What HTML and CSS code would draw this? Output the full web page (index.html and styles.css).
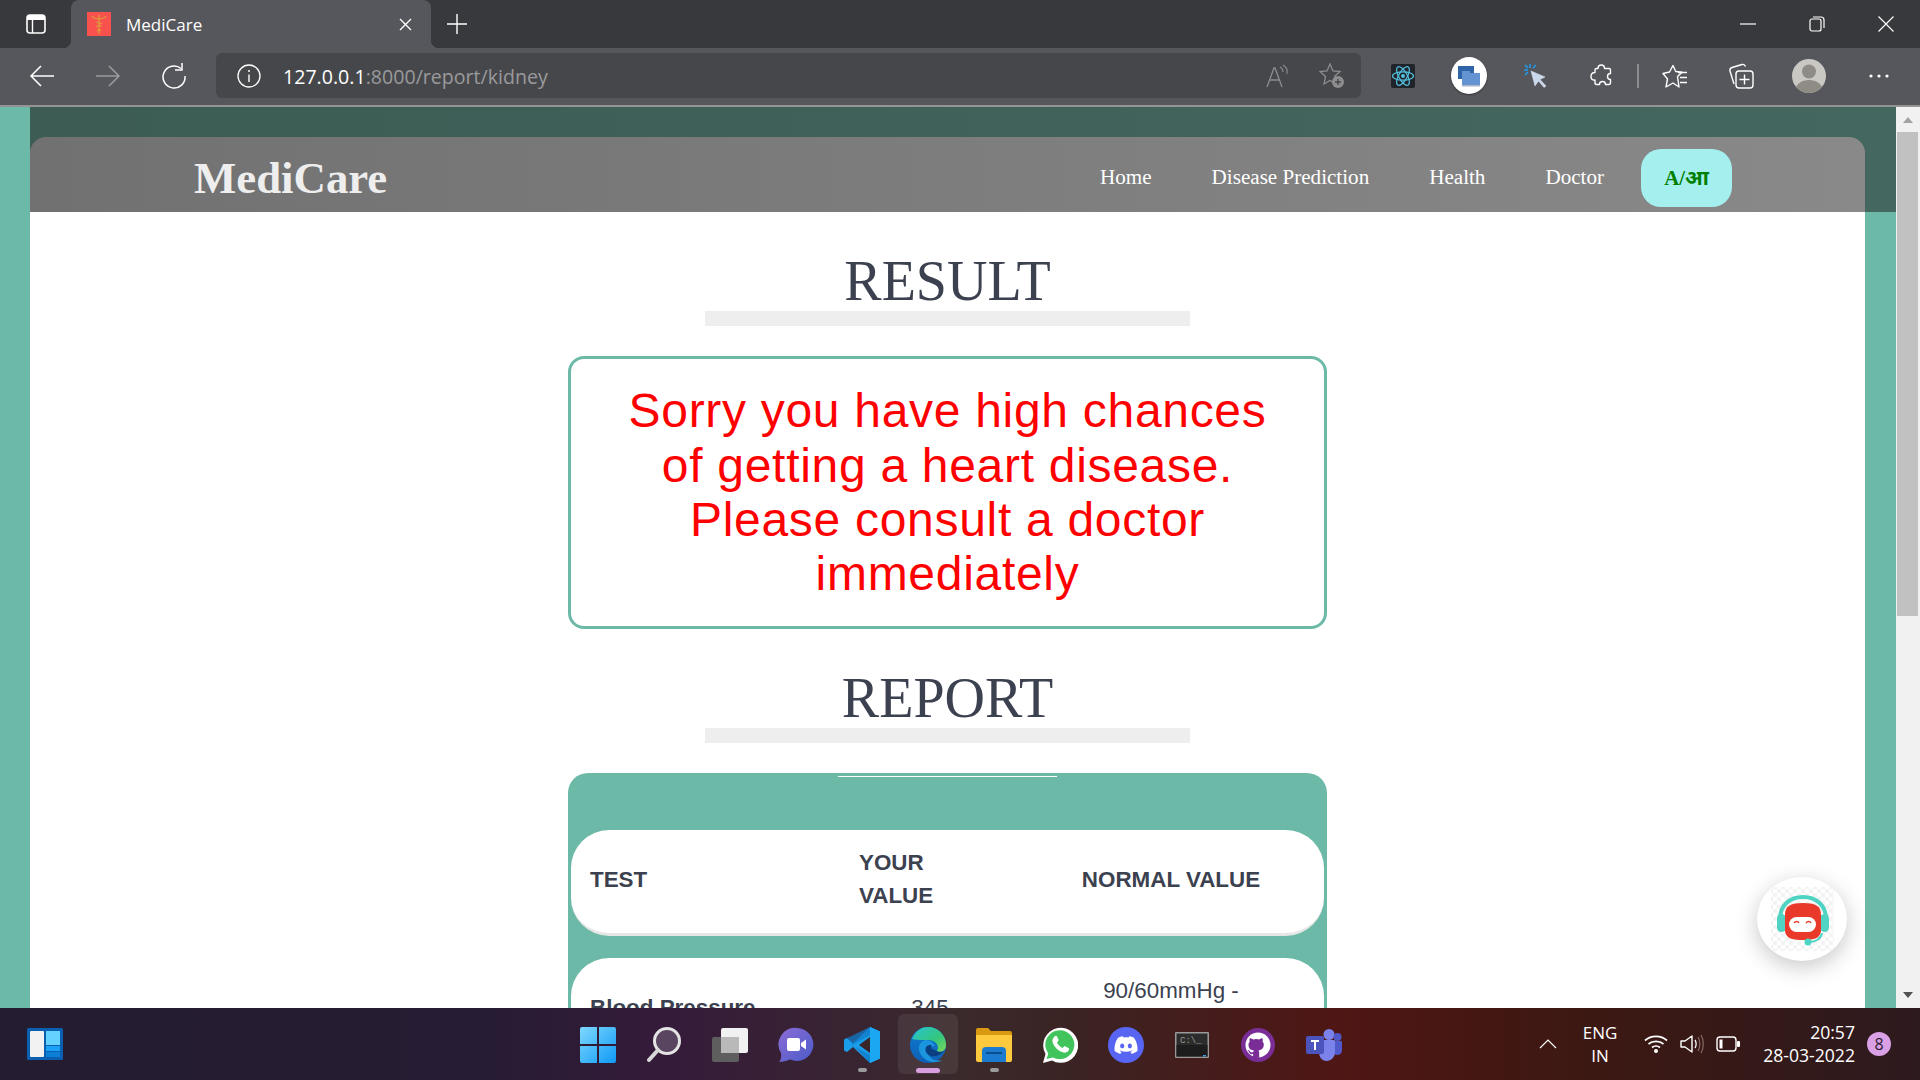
FILE: index.html
```html
<!DOCTYPE html>
<html lang="en">
<head>
<meta charset="utf-8">
<title>MediCare</title>
<link rel="stylesheet" href="styles.css">
</head>
<body>
<div class="screen">
  <div class="tabstrip">
    <div class="tab-toggle">
      <svg width="20" height="20" viewBox="0 0 20 20"><rect x="1" y="1" width="18" height="18" rx="3" fill="none" stroke="#fff" stroke-width="1.6"/><path d="M1 4a3 3 0 0 1 3-3h12a3 3 0 0 1 3 3v2H1z" fill="#fff"/><path d="M6.5 6v13" stroke="#fff" stroke-width="1.4"/></svg>
    </div>
    <div class="tab">
      <svg class="favicon" width="24" height="24" viewBox="0 0 24 24"><rect width="24" height="24" fill="#f9514e"/><path d="M12 3v19M5 4c2 3 4 3 7 3s5 0 7-3M9 10c2 1 4 2 6 1M9 15c2-2 4-2 6-1M10 19c1-1 3-1 4-1" fill="none" stroke="#dd9a3c" stroke-width="1.3"/></svg>
      <span class="tab-title">MediCare</span>
      <svg width="13" height="13" viewBox="0 0 13 13"><path d="M1 1l11 11M12 1L1 12" stroke="#fff" stroke-width="1.4"/></svg>
    </div>
    <div class="tab-new">
      <svg width="20" height="20" viewBox="0 0 20 20"><path d="M10 0v20M0 10h20" stroke="#fff" stroke-width="1.4"/></svg>
    </div>
    <div class="window-controls">
      <div class="win-btn"><svg width="16" height="16" viewBox="0 0 16 16"><path d="M0 8h16" stroke="#fff" stroke-width="1.2"/></svg></div>
      <div class="win-btn"><svg width="16" height="16" viewBox="0 0 16 16"><rect x="1" y="3" width="11" height="12" rx="2" fill="none" stroke="#fff" stroke-width="1.2"/><path d="M4 1h8a3 3 0 0 1 3 3v8" fill="none" stroke="#fff" stroke-width="1.2"/></svg></div>
      <div class="win-btn"><svg width="16" height="16" viewBox="0 0 16 16"><path d="M.5.5l15 15M15.500.5l-15 15" stroke="#fff" stroke-width="1.2"/></svg></div>
    </div>
  </div>

  <div class="toolbar">
    <div class="tool"><svg width="26" height="26" viewBox="0 0 26 26"><path d="M25 13H2M12 3L2 13l10 10" fill="none" stroke="#fff" stroke-width="1.5"/></svg></div>
    <div class="tool"><svg width="26" height="26" viewBox="0 0 26 26"><path d="M1 13h23M14 3l10 10-10 10" fill="none" stroke="#9b9b9e" stroke-width="1.5"/></svg></div>
    <div class="tool"><svg width="26" height="26" viewBox="0 0 26 26"><path d="M20 5.500A11 11 0 1 0 24 13" fill="none" stroke="#fff" stroke-width="1.5"/><path d="M21 0v7h-7" fill="none" stroke="#fff" stroke-width="1.5"/></svg></div>
    <div class="address">
      <svg width="24" height="24" viewBox="0 0 24 24"><circle cx="12" cy="12" r="11" fill="none" stroke="#fff" stroke-width="1.3"/><path d="M12 10.500v7.500" stroke="#fff" stroke-width="1.4"/><circle cx="12" cy="7" r="1" fill="#fff"/></svg>
      <div class="url"><span class="url-host">127.0.0.1</span>:8000/report/kidney</div>
      <svg class="addr-read" width="24" height="24" viewBox="0 0 24 24"><path d="M1 23L8 4h1l7 19M4 16h10" fill="none" stroke="#8d8d90" stroke-width="1.3"/><path d="M14 3c2 1 3 3 3 5M17 1c3 2 5 5 4 9" fill="none" stroke="#8d8d90" stroke-width="1.1"/></svg>
      <svg class="addr-fav" width="26" height="26" viewBox="0 0 26 26"><path d="M11 1l3 7 7 .6-5.300 4.700L17 21l-6-3.500L5 21l1.500-7.500L1 8.600 8 8z" fill="none" stroke="#8d8d90" stroke-width="1.3"/><circle cx="19" cy="19" r="6" fill="#8d8d90"/><path d="M19 16v6M16 19h6" stroke="#46474b" stroke-width="1.4"/></svg>
    </div>
    <div class="ext-group">
      <div class="tool"><svg width="24" height="24" viewBox="0 0 24 24"><rect width="24" height="24" rx="2" fill="#20232a"/><g fill="none" stroke="#53c1de" stroke-width="1.2"><ellipse cx="12" cy="12" rx="10.500" ry="4.200"/><ellipse cx="12" cy="12" rx="10.500" ry="4.200" transform="rotate(60 12 12)"/><ellipse cx="12" cy="12" rx="10.500" ry="4.200" transform="rotate(120 12 12)"/></g><circle cx="12" cy="12" r="2" fill="#53c1de"/></svg></div>
      <div class="tool"><div class="ext-circle"><svg width="24" height="22" viewBox="0 0 24 22"><rect x="1" y="1" width="16" height="13" fill="#2f64a8"/><rect x="5" y="8" width="18" height="13" fill="#6493d2"/><rect x="5" y="6" width="8" height="3" fill="#6493d2"/><rect x="5" y="20" width="18" height="1.500" fill="#a9b6c8"/></svg></div></div>
      <div class="tool"><svg width="24" height="24" viewBox="0 0 24 24"><path d="M8 7l14 6-5 2.500 6 6.500-2 1.500-5.500-6.500L12 22z" fill="#c9d8ec" stroke="#dfe7f2" stroke-width=".5"/><path d="M7 0v4M1 6h4M13 1l-3 3M2 1l3 3M2 11l3-3" stroke="#1e9df1" stroke-width="1.500"/></svg></div>
      <div class="tool"><svg width="24" height="24" viewBox="0 0 24 24"><path d="M9 4.500C9 2.500 10.500 1 12.300 1s3.200 1.500 3.200 3.500H20c1 0 1.500.7 1.500 1.500v3.500c-1.800 0-3 1.300-3 3s1.200 3 3 3v3c0 1.200-.8 2-2 2h-3c0-1.500-1.200-3-3-3s-3 1.500-3 3H7.500c-1 0-1.500-.7-1.500-1.500v-3C4 16.500 2 15.500 2 12.500S4 8.500 6 8.500V6c0-1 .7-1.500 1.500-1.500z" fill="none" stroke="#fff" stroke-width="1.400" stroke-linejoin="round"/></svg></div>
      <div class="tool-sep"></div>
      <div class="tool"><svg width="26" height="24" viewBox="0 0 26 24"><path d="M11 1.500l2.800 6 6.200.7-4.500 4.300L17 23l-6-4-7 4 1.500-8L1 9.500l6.500-1.500z" fill="none" stroke="#fff" stroke-width="1.400" stroke-linejoin="round"/><path d="M16 8.500h9M18 13.500h7M18 18.500h7" stroke="#fff" stroke-width="1.400"/></svg></div>
      <div class="tool"><svg width="26" height="26" viewBox="0 0 26 26"><path d="M6 21L2 8c-.500-2 .500-3 2-3.500L14 1.500c2-.5 3 .5 3.500 2" fill="none" stroke="#fff" stroke-width="1.400"/><rect x="8" y="8" width="17" height="17" rx="3" fill="#56575c" stroke="#fff" stroke-width="1.400"/><path d="M16.500 11.500v10M11.500 16.500h10" stroke="#fff" stroke-width="1.400"/></svg></div>
      <div class="tool tool-wide"><svg width="34" height="34" viewBox="0 0 34 34"><defs><clipPath id="pc"><circle cx="17" cy="17" r="17"/></clipPath></defs><circle cx="17" cy="17" r="17" fill="#c9c8c3"/><g clip-path="url(#pc)" fill="#8f8c85"><circle cx="17" cy="12.500" r="7"/><ellipse cx="17" cy="32" rx="14" ry="11"/></g></svg></div>
      <div class="tool tool-wide"><svg width="20" height="4" viewBox="0 0 20 4"><circle cx="2" cy="2" r="1.600" fill="#fff"/><circle cx="10" cy="2" r="1.600" fill="#fff"/><circle cx="18" cy="2" r="1.600" fill="#fff"/></svg></div>
    </div>
  </div>

  <div class="viewport">
    <div class="page">
      <div class="band">
        <nav class="nav">
          <div class="brand">MediCare</div>
          <div class="nav-links">
            <a class="nav-link">Home</a>
            <a class="nav-link">Disease Prediction</a>
            <a class="nav-link">Health</a>
            <a class="nav-link">Doctor</a>
            <a class="lang-btn">A/आ</a>
          </div>
        </nav>
      </div>
      <main class="content">
        <h2 class="title">RESULT</h2>
        <div class="title-bar"></div>
        <div class="result-box">Sorry you have high chances of getting a heart disease. Please consult a doctor immediately</div>
        <h2 class="title title-report">REPORT</h2>
        <div class="title-bar"></div>
        <section class="report-card">
          <div class="card-line"></div>
          <div class="row row-head">
            <div class="cell-test">TEST</div>
            <div class="cell-yours">YOUR VALUE</div>
            <div class="cell-normal">NORMAL VALUE</div>
          </div>
          <div class="row">
            <div class="cell-test">Blood Pressure</div>
            <div class="cell-value">345</div>
            <div class="cell-normal">90/60mmHg - 120/80mmHg</div>
          </div>
        </section>
      </main>
    </div>
    <div class="scrollbar">
      <div class="arrow-slot"><div class="arrow-up"></div></div>
      <div class="thumb"></div>
      <div class="arrow-slot arrow-slot-end"><div class="arrow-down"></div></div>
    </div>
    <div class="chatbot">
      <svg width="90" height="84" viewBox="0 0 90 84">
        <defs><pattern id="chk" width="8" height="8" patternUnits="userSpaceOnUse"><rect width="8" height="8" fill="#fff"/><rect width="4" height="4" fill="#f3f3f3"/><rect x="4" y="4" width="4" height="4" fill="#f3f3f3"/></pattern></defs>
        <rect x="14" y="10" width="63" height="64" fill="url(#chk)"/>
        <path d="M23 42C23 28 33 20 46 20s23 8 23 22" fill="none" stroke="#4fd3c3" stroke-width="4"/>
        <rect x="20" y="37" width="9" height="18" rx="4.500" fill="#4fd3c3"/>
        <rect x="63" y="37" width="9" height="18" rx="4.500" fill="#4fd3c3"/>
        <path d="M28 38c0-9 5-12 18-12s18 3 18 12v16c-1 7-6 9-18 9s-17-2-18-9z" fill="#e8392b"/>
        <rect x="32" y="40" width="27" height="15" rx="7.500" fill="#fff"/>
        <path d="M37 46c1.500-2 4-2 5 0M49 46c1.500-2 4-2 5 0" fill="none" stroke="#e8392b" stroke-width="1.300"/>
        <path d="M65 56c-1 6-7 9-12 9" fill="none" stroke="#4fd3c3" stroke-width="2"/>
        <circle cx="51" cy="65" r="3.500" fill="#4fd3c3"/>
      </svg>
    </div>
  </div>

  <div class="taskbar">
    <div class="task-left">
      <svg width="36" height="32" viewBox="0 0 36 32"><rect width="36" height="32" rx="1.500" fill="#0a5fb0"/><rect x="3" y="3" width="14" height="26" rx="1" fill="#f2f2f2"/><rect x="19" y="3" width="14" height="14" fill="#63d2ff"/><rect x="19" y="18" width="14" height="5" fill="#1ba1f5"/><rect x="19" y="24" width="14" height="5" fill="#0e7fd6"/></svg>
    </div>
    <div class="task-center">
      <div class="task-item"><svg width="36" height="36" viewBox="0 0 36 36"><defs><linearGradient id="w1" x1="0" y1="0" x2="1" y2="1"><stop offset="0" stop-color="#7fd8ff"/><stop offset="1" stop-color="#0f9af5"/></linearGradient></defs><path d="M2 0h15v17H0V2a2 2 0 0 1 2-2zM19 0h15a2 2 0 0 1 2 2v15H19zM0 19h17v17H2a2 2 0 0 1-2-2zM19 19h17v15a2 2 0 0 1-2 2H19z" fill="url(#w1)"/></svg></div>
      <div class="task-item"><svg width="34" height="36" viewBox="0 0 34 36"><circle cx="20" cy="14" r="12.500" fill="#5a4560" stroke="#e4e4e4" stroke-width="3"/><path d="M11 23L2 33" stroke="#d8d8d8" stroke-width="4" stroke-linecap="round"/></svg></div>
      <div class="task-item"><svg width="36" height="34" viewBox="0 0 36 34"><rect y="9" width="27" height="25" rx="2" fill="#5e5e5e"/><rect x="9" width="27" height="25" rx="2" fill="#f1f1f1"/><rect x="9" y="9" width="18" height="16" fill="#b9b9b9"/></svg></div>
      <div class="task-item"><svg width="36" height="36" viewBox="0 0 36 36"><defs><linearGradient id="ch" x1="0" y1="0" x2="1" y2="1"><stop offset="0" stop-color="#8c6cd6"/><stop offset="1" stop-color="#4a5bc8"/></linearGradient></defs><path d="M19 1a16.500 16.500 0 1 1-7 31.500C9 34 5 35 1 35c2-2 2.500-5 2-9A16.500 16.500 0 0 1 19 1z" fill="url(#ch)"/><rect x="9" y="11" width="13" height="13" rx="2" fill="#fff"/><path d="M23 16l5-3.500v10L23 19z" fill="#fff"/></svg></div>
      <div class="task-item has-dot"><svg width="36" height="36" viewBox="0 0 36 36"><path d="M26 0l10 4.500v27L26 36 9 20 3 25 0 23.500v-11L3 11l6 5z" fill="#1a9eea"/><path d="M26 0v36l10-4.500v-27z" fill="#1ba7f2"/><path d="M26 10L15 18l11 8z" fill="#3a2628"/><path d="M0 12.500L3 11l23 25 0-8L8 18 26 8V0z" fill="#0f79c7" opacity=".75"/></svg></div>
      <div class="task-item is-active"><svg width="36" height="36" viewBox="0 0 36 36"><defs><linearGradient id="e1" x1="0" y1="0" x2="1" y2="1"><stop offset="0" stop-color="#29c4d6"/><stop offset=".6" stop-color="#34c67b"/><stop offset="1" stop-color="#7ed957"/></linearGradient><linearGradient id="e2" x1="0" y1="0" x2="0" y2="1"><stop offset="0" stop-color="#0c7fd0"/><stop offset="1" stop-color="#0f5fb5"/></linearGradient></defs><circle cx="18" cy="18" r="18" fill="url(#e2)" /><path d="M2 12C6 3 12 0 18 0c10 0 18 8 18 18 0 6-5 8-9 6 3-5-1-11-9-11-7 0-13 0-16-1z" fill="url(#e1)"/><path d="M16 13c-6 1-9 7-6 13s9 10 17 9c2 0 4-1 5-2-7 2-14-2-14-8 0-3 3-6 7-6-2-4-5-6-9-6z" fill="#1b95de"/><path d="M19 18c-5 1-5 9 2 11 5 1 10-1 13-5-3 2-7 1-9-1-3 0-5-3-3-5z" fill="#0b3f82"/></svg></div>
      <div class="task-item has-dot"><svg width="36" height="34" viewBox="0 0 36 34"><path d="M0 2a2 2 0 0 1 2-2h10l3 3h19a2 2 0 0 1 2 2v4H0z" fill="#d99a12"/><path d="M0 7h36v25a2 2 0 0 1-2 2H2a2 2 0 0 1-2-2z" fill="#fdc93f"/><path d="M6 34V23a4 4 0 0 1 4-4h16a4 4 0 0 1 4 4v11z" fill="#1a7bd0"/><rect x="10" y="24" width="16" height="2" fill="#0c4f8e"/></svg></div>
      <div class="task-item"><svg width="36" height="36" viewBox="0 0 36 36"><path d="M1 36l2.500-9A17.500 17.500 0 1 1 10 33.500z" fill="#fff"/><path d="M4.500 32l1.800-5.500A14.500 14.500 0 1 1 11 30.500z" fill="#41c45c"/><path d="M12.500 9.500c1-1 2-1 2.500 0l1.500 3c.2.700 0 1.300-.5 1.800l-1 1.200c1 2.300 3 4.200 5.500 5.500l1.300-1.200c.5-.5 1.200-.6 1.700-.3l3 1.500c.8.500.8 1.500.2 2.500-1 1.700-3.200 2.500-5.200 2-5.500-1.500-9.500-5.500-11-10.500-.5-2 .5-4 2-5.500z" fill="#fff"/></svg></div>
      <div class="task-item"><svg width="36" height="36" viewBox="0 0 36 36"><circle cx="18" cy="18" r="18" fill="#5865f2"/><g transform="translate(6.500 6.500) scale(.96)"><path fill="#fff" d="M20.317 4.3698a19.7913 19.7913 0 00-4.8851-1.5152.0741.0741 0 00-.0785.0371c-.211.3753-.4447.8648-.6083 1.2495-1.8447-.2762-3.68-.2762-5.4868 0-.1636-.3933-.4058-.8742-.6177-1.2495a.077.077 0 00-.0785-.037 19.7363 19.7363 0 00-4.8852 1.515.0699.0699 0 00-.0321.0277C.5334 9.0458-.319 13.5799.0992 18.0578a.0824.0824 0 00.0312.0561c2.0528 1.5076 4.0413 2.4228 5.9929 3.0294a.0777.0777 0 00.0842-.0276c.4616-.6304.8731-1.2952 1.226-1.9942a.076.076 0 00-.0416-.1057c-.6528-.2476-1.2743-.5495-1.8722-.8923a.077.077 0 01-.0076-.1277c.1258-.0943.2517-.1923.3718-.2914a.0743.0743 0 01.0776-.0105c3.9278 1.7933 8.18 1.7933 12.0614 0a.0739.0739 0 01.0785.0095c.1202.099.246.1981.3728.2924a.077.077 0 01-.0066.1276 12.2986 12.2986 0 01-1.8732.8914.0766.0766 0 00-.0407.1067c.3604.698.7719 1.3628 1.225 1.9932a.076.076 0 00.0842.0286c1.961-.6067 3.9495-1.5219 6.0023-3.0294a.077.077 0 00.0313-.0552c.5004-5.177-.8382-9.6739-3.5485-13.6604a.061.061 0 00-.0312-.0286zM8.02 15.3312c-1.1825 0-2.1569-1.0857-2.1569-2.419 0-1.3332.9555-2.4189 2.157-2.4189 1.2108 0 2.1757 1.0952 2.1568 2.419 0 1.3332-.9555 2.4189-2.1569 2.4189zm7.9748 0c-1.1825 0-2.1569-1.0857-2.1569-2.419 0-1.3332.9554-2.4189 2.1569-2.4189 1.2108 0 2.1757 1.0952 2.1568 2.419 0 1.3332-.946 2.4189-2.1568 2.4189Z"/></g></svg></div>
      <div class="task-item"><svg width="34" height="26" viewBox="0 0 34 26"><rect width="34" height="26" rx="1" fill="#9a9a9a"/><rect x="1.500" y="1.500" width="31" height="23" fill="#2c2c2c"/><rect x="1.500" y="13" width="31" height="11.500" fill="#1d1d1d"/><text class="cmd-text" x="5" y="11">C:\_</text><rect x="28" y="23" width="3" height="1.500" fill="#3aa0e0"/></svg></div>
      <div class="task-item"><svg width="34" height="34" viewBox="0 0 34 34"><circle cx="17" cy="17" r="17" fill="#7a2d96"/><circle cx="17" cy="17" r="12.500" fill="#fff"/><g transform="translate(5 5)"><path fill="#7a2d96" d="M7 23.700c-.1-.9.200-1.500.2-2.700-3.300.7-4-1.600-4-1.600-.6-1.400-1.400-1.800-1.400-1.800-1-.7.1-.7.1-.7 1.200 0 1.900 1.200 1.900 1.200 1 1.800 2.800 1.300 3.500 1 0-.8.400-1.300.7-1.600-2.700-.3-5.500-1.300-5.500-6 0-1.200.5-2.300 1.300-3.100-.2-.4-.6-1.600 0-3.200 0 0 1-.3 3.400 1.200a11.500 11.500 0 0 1 6 0c2.300-1.500 3.300-1.200 3.300-1.200.6 1.600.2 2.800 0 3.200.9.800 1.300 1.900 1.300 3.200 0 4.600-2.800 5.600-5.500 5.900.5.400.9 1 .9 2.200v4.700c-3 1.500-7 1.500-10.200 0z"/></g></svg></div>
      <div class="task-item"><svg width="36" height="32" viewBox="0 0 36 32"><circle cx="23" cy="5.500" r="5.500" fill="#7b83eb"/><circle cx="31.500" cy="8" r="4" fill="#5059c9"/><path d="M26 12h9a1 1 0 0 1 1 1v8c0 3-2 5-5 5-2 0-3-1-5-2z" fill="#5059c9"/><path d="M13 11h15a1 1 0 0 1 1 1v11c0 5-4 9-8.500 9S13 28 13 23z" fill="#7b83eb"/><rect y="7" width="18" height="18" rx="2" fill="#4b53bc"/><path d="M5 11h8v2h-3v8H8v-8H5z" fill="#fff"/></svg></div>
    </div>
    <div class="tray">
      <svg class="tray-chevron" width="18" height="10" viewBox="0 0 18 10"><path d="M1 9l8-8 8 8" fill="none" stroke="#fff" stroke-width="1.200"/></svg>
      <div class="tray-lang">ENG<br>IN</div>
      <svg class="tray-wifi" width="24" height="20" viewBox="0 0 24 20"><g fill="none" stroke="#fff" stroke-width="1.700"><path d="M1 6.500c6-5.500 16-5.500 22 0"/><path d="M4.500 10c4-3.500 11-3.500 15 0"/><path d="M8 13.500c2.300-2 5.700-2 8 0"/></g><circle cx="12" cy="17" r="2" fill="#fff"/></svg>
      <svg class="tray-sound" width="24" height="20" viewBox="0 0 24 20"><path d="M1 7h4l7-5v16l-7-5H1z" fill="none" stroke="#fff" stroke-width="1.400" stroke-linejoin="round"/><path d="M15 6c1.500 2 1.500 6 0 8" fill="none" stroke="#fff" stroke-width="1.300"/><path d="M18 3c2.500 4 2.500 10 0 14M21 1c3 5 3 13 0 18" fill="none" stroke="#8a6a66" stroke-width="1.200"/></svg>
      <svg class="tray-battery" width="24" height="16" viewBox="0 0 24 16"><rect x="1" y="1" width="19" height="14" rx="3" fill="none" stroke="#fff" stroke-width="1.400"/><rect x="3.500" y="3.500" width="3" height="9" fill="#fff"/><rect x="21" y="5" width="3" height="6" rx="1" fill="#fff"/></svg>
      <div class="tray-clock">20:57<br>28-03-2022</div>
      <div class="tray-badge">8</div>
    </div>
  </div>
</div>
</body>
</html>
```

FILE: styles.css
```css
* { box-sizing: border-box; }
html, body { margin: 0; padding: 0; height: 100%; overflow: hidden; }
.screen { width: 1920px; height: 1080px; display: flex; flex-direction: column; overflow: hidden; font-family: "Open Sans", "Noto Sans", sans-serif; }

/* tab strip */
.tabstrip { height: 48px; flex: none; display: flex; background: #38393d; }
.tab-toggle { width: 71px; display: flex; align-items: center; justify-content: center; padding-left: 1px; }
.tab { position: relative; width: 360px; display: flex; align-items: center; padding: 0 19px 0 16px; background: #56575c; border-radius: 8px 8px 0 0; color: #fff; }
.tab::before, .tab::after { content: ""; position: absolute; bottom: 0; width: 8px; height: 8px; }
.tab::before { left: -8px; background: radial-gradient(circle at 0 0, transparent 8px, #56575c 8.500px); }
.tab::after { right: -8px; background: radial-gradient(circle at 100% 0, transparent 8px, #56575c 8.500px); }
.favicon { margin-right: 15px; }
.tab-title { flex: 1; font-size: 17px; }
.tab-new { width: 52px; display: flex; align-items: center; justify-content: center; }
.window-controls { margin-left: auto; display: flex; }
.win-btn { width: 69px; display: flex; align-items: center; justify-content: center; padding-bottom: 1px; }

/* toolbar */
.toolbar { height: 59px; flex: none; display: flex; align-items: center; padding: 0 0 2px 9px; background: #56575c; border-bottom: 2px solid #949494; }
.tool { width: 66px; height: 45px; display: flex; align-items: center; justify-content: center; flex: none; }
.tool-wide { width: 70px; }
.address { width: 1145px; height: 45px; margin-left: 9px; display: flex; align-items: center; padding: 0 16px 0 21px; background: #46474b; border-radius: 6px; }
.url { flex: 1; margin: 2px 0 0 22px; font-size: 19.6px; color: #9a9a9c; white-space: nowrap; }
.url-host { color: #fff; }
.addr-read { margin-right: 29px; }
.ext-group { display: flex; align-items: center; margin-left: 9px; }
.ext-circle { width: 36px; height: 37px; border-radius: 50%; background: #fff; display: flex; align-items: center; justify-content: center; box-shadow: 0 1px 2px rgba(0,0,0,.4); }
.tool-sep { width: 2px; height: 24px; margin: 0 3px; background: #8c8d90; }

/* page */
.viewport { position: relative; flex: 1; display: flex; min-height: 0; overflow: hidden; }
.page { flex: 1; min-width: 0; background: #6cb9a8; overflow: hidden; }
.band { margin-left: 30px; padding: 30px 31px 0 0; background: linear-gradient(to right, #3c5c54, #44675f); }
.nav { height: 75px; display: flex; align-items: center; justify-content: space-between; padding: 7px 133px 0 164px; background: linear-gradient(to right, #717171, #8a8989); border-radius: 16px 16px 0 0; }
.brand { font: 700 44.8px/1 "Liberation Serif", serif; color: #eee; }
.nav-links { display: flex; align-items: center; }
.nav-link { padding: 0 30px; font: 400 21.1px/1.2 "Liberation Serif", serif; color: #fff; }
.lang-btn { width: 91px; height: 58px; margin-left: 7px; display: flex; align-items: center; justify-content: center; background: #a5efef; border-radius: 20px; font: 700 20.8px/1 "Liberation Serif", "Noto Sans", serif; color: #008000; }
.content { margin: 0 31px 0 30px; height: 796px; padding-top: 39px; display: flex; flex-direction: column; align-items: center; background: #fff; overflow: hidden; }
.content > * { flex: none; }
.title { margin: 0; font: 400 56px/60.2px "Liberation Serif", serif; color: #3c4150; }
.title-report { margin-top: 38.7px; }
.title-bar { width: 485px; height: 15px; background: #eee; }
.result-box { width: 759px; margin-top: 30px; padding: 25px 44px 24px; border: 3px solid #6cb9a8; border-radius: 16px; font: 400 48px/54.4px "Liberation Sans", sans-serif; letter-spacing: .7px; text-align: center; color: #f00; }
.report-card { position: relative; width: 759px; margin-top: 30px; padding: 57px 3px 0; background: #6cb9a8; border-radius: 20px 20px 0 0; }
.card-line { position: absolute; top: 3px; left: 270px; width: 219px; height: 1px; background: #fff; }
.row { display: grid; grid-template-columns: 269px 142px 198px; align-items: center; padding: 16px 19px 20px; background: #fff; border-bottom: 3px solid #e6e6e6; border-radius: 38px; font: 400 22.4px/33.6px "Liberation Sans", sans-serif; color: #3c4150; }
.row-head { margin-bottom: 22px; font-weight: 700; }
.cell-test { font-weight: 700; }
.cell-yours { width: 110px; }
.cell-value { text-align: center; }
.cell-normal { margin-left: 71px; text-align: center; white-space: normal; }
.row > .cell-normal { width: 198px; }

/* scrollbar */
.scrollbar { width: 24px; flex: none; display: flex; flex-direction: column; background: #f1f1f1; }
.arrow-slot { height: 25px; display: flex; align-items: center; justify-content: center; }
.arrow-slot-end { margin-top: auto; height: 26px; }
.arrow-up { width: 0; height: 0; border: 5.500px solid transparent; border-top: 0; border-bottom: 6px solid #a3a3a3; }
.arrow-down { width: 0; height: 0; border: 5.500px solid transparent; border-bottom: 0; border-top: 6px solid #505050; }
.thumb { width: 21px; height: 484px; margin-left: 1px; background: #c1c1c1; }

/* chatbot overlay */
.chatbot { position: absolute; top: 770px; right: 73px; width: 90px; height: 84px; border-radius: 50%; overflow: hidden; background: #fff; box-shadow: 0 6px 22px rgba(0,0,0,.22); }
.chatbot svg { display: block; }

/* taskbar */
.taskbar { height: 72px; flex: none; display: grid; grid-template-columns: 565px auto 1fr; align-items: center; background: linear-gradient(to right, #241c30 0, #261c33 25%, #351b3a 35%, #3b2a2c 50%, #3a2424 55%, #4f1614 70%, #3d1812 82%, #2d1a1e 100%); color: #fff; }
.task-left { padding-left: 27px; display: flex; align-items: center; }
.task-center { display: flex; }
.task-item { position: relative; width: 66px; height: 60px; display: flex; align-items: center; justify-content: center; padding-top: 1px; }
.task-item.is-active::before { content: ""; position: absolute; left: 3px; top: 0; width: 60px; height: 60px; border-radius: 6px; background: rgba(255,255,255,.07); }
.task-item svg { position: relative; }
.task-item.is-active::after { content: ""; position: absolute; left: 21px; bottom: 1px; width: 24px; height: 5px; border-radius: 3px; background: #d99ee0; }
.task-item.has-dot::after { content: ""; position: absolute; left: 29px; bottom: 2px; width: 9px; height: 4px; border-radius: 2px; background: #9a9a9a; }
.cmd-text { font: 400 9px "Liberation Mono", monospace; fill: #9a9a9a; }
.tray { justify-self: end; display: flex; align-items: center; padding-right: 29px; font-size: 17px; line-height: 23px; }
.tray-chevron { margin-right: 25px; }
.tray-lang { width: 36px; text-align: center; margin-right: 26px; }
.tray-wifi, .tray-sound { margin-right: 12px; }
.tray-battery { margin-right: 23px; }
.tray-clock { width: 92px; font-size: 17.6px; text-align: right; white-space: nowrap; margin-right: 12px; }
.tray-badge { width: 24px; height: 24px; border-radius: 50%; background: #d9a0e6; color: #2a1a2c; font-size: 16px; line-height: 24px; text-align: center; }
```
